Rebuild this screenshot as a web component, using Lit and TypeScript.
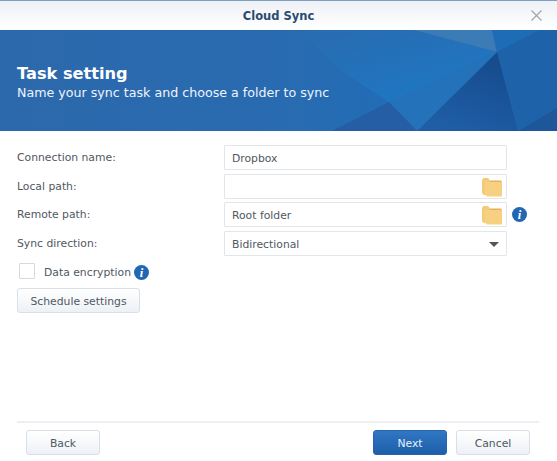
import { LitElement, html, css, svg } from "lit";
import { customElement } from "lit/decorators.js";

const folder = html`<svg class="folder" viewBox="0 0 21 19" width="21" height="19" aria-hidden="true">
  <path d="M0 1.5 L1.5 0 H6 L8 2.5 V17 H1.5 L0 15 Z" fill="#f3cb7b"/>
  <path d="M3 4 H20 V18.5 H5 L3 16.5 Z" fill="#f7d082"/>
  <path d="M3 4 H7 L8.5 2.5 H19 L20 4 Z" fill="#e3b35c"/>
</svg>`;

const info = html`<svg class="info" viewBox="0 0 15 15" width="15" height="15" aria-hidden="true">
  <circle cx="7.5" cy="7.5" r="7.5" fill="#2167b4"/>
  <text x="7.6" y="12" text-anchor="middle" font-family="Liberation Serif, serif" font-style="italic" font-weight="700" font-size="12.5" fill="#fff">i</text>
</svg>`;

const facets = svg`
  <defs>
    <linearGradient id="base" x1="0" y1="0" x2="1" y2="0">
      <stop offset="0" stop-color="#2c68ac"/>
      <stop offset="0.5" stop-color="#296bb0"/>
      <stop offset="0.75" stop-color="#1f6db8"/>
      <stop offset="1" stop-color="#1d68b2"/>
    </linearGradient>
    <linearGradient id="mid" x1="0" y1="0" x2="0.75" y2="1">
      <stop offset="0" stop-color="#296bb0"/>
      <stop offset="1" stop-color="#1e78c4"/>
    </linearGradient>
    <linearGradient id="dark" x1="0.8" y1="0" x2="0.3" y2="1">
      <stop offset="0" stop-color="#154a8b"/>
      <stop offset="1" stop-color="#1f5ea6"/>
    </linearGradient>
  </defs>
  <rect width="557" height="101" fill="url(#base)"/>
  <polygon points="300,0 414,0 497,22 389,72 340,40" fill="url(#mid)"/>
  <polygon points="414,0 492,0 497,22" fill="#3b7cb6"/>
  <polygon points="492,0 540,0 497,22" fill="#1f6cb6"/>
  <polygon points="540,0 557,0 557,78 518,100 497,22" fill="#1e62aa"/>
  <polygon points="497,22 417,101 518,101" fill="url(#dark)"/>
  <polygon points="497,22 389,72 417,101" fill="#2472ba"/>
  <polygon points="389,72 332,101 417,101" fill="#255ea4"/>
  <polygon points="557,78 518,101 557,101" fill="#1d5699"/>
`;

@customElement("app-root")
export class AppRoot extends LitElement {
  static styles = css`
    :host {
      display: flex;
      flex-direction: column;
      width: 557px;
      height: 461px;
      background: #fff;
      color: #50585f;
      font-family: "DejaVu Sans", Verdana, sans-serif;
      font-size: 10.8px;
      overflow: hidden;
    }
    .titlebar {
      flex: none;
      height: 30px;
      box-sizing: border-box;
      border-top: 1px solid #7d9fc4;
      background: linear-gradient(#eef1f5, #ffffff);
      display: flex;
      align-items: center;
      justify-content: center;
      position: relative;
    }
    .title {
      font-weight: 700;
      font-size: 11.5px;
      color: #2b4a70;
    }
    .close {
      position: absolute;
      right: 15px;
      top: 9px;
      width: 11px;
      height: 11px;
    }
    .banner {
      flex: none;
      height: 101px;
      box-sizing: border-box;
      position: relative;
      padding: 34px 17px 0;
      color: #fff;
    }
    .facets {
      position: absolute;
      left: 0;
      top: 0;
      width: 557px;
      height: 101px;
    }
    .banner h1,
    .banner p {
      position: relative;
      margin: 0;
    }
    .banner h1 {
      font-size: 16.2px;
      line-height: 19px;
      font-weight: 700;
    }
    .banner p {
      font-size: 12.65px;
      line-height: 18px;
      margin-top: 1px;
      color: #eef4fb;
    }
    .form {
      flex: 1;
      padding: 14px 17px 0;
    }
    .grid {
      display: grid;
      grid-template-columns: 207px 283px auto;
      grid-auto-rows: 25px;
      row-gap: 3.7px;
      align-items: center;
    }
    .field {
      height: 25px;
      box-sizing: border-box;
      border: 1.5px solid #e3e6e9;
      border-radius: 1px;
      background: #fff;
      display: flex;
      align-items: center;
      justify-content: space-between;
      padding: 1px 3px 0 7px;
    }
    .folder {
      margin-top: 1px;
      flex: none;
    }
    .grid .info {
      margin-left: 5px;
      display: block;
    }
    .caret {
      width: 0;
      height: 0;
      border-left: 5px solid transparent;
      border-right: 5px solid transparent;
      border-top: 5px solid #555;
      margin: 1px 4px 0 0;
    }
    .check {
      display: flex;
      align-items: flex-start;
      margin: 7px 0 0 2px;
      height: 17px;
    }
    .box {
      width: 16px;
      height: 16px;
      box-sizing: border-box;
      border: 1.5px solid #d6d9dd;
      border-radius: 1px;
      margin-right: 9px;
    }
    .check .text {
      margin-top: 3px;
    }
    .check .info {
      margin: 2px 0 0 3px;
    }
    button {
      font: inherit;
      color: #50585f;
      height: 25px;
      box-sizing: border-box;
      border: 1px solid #d8dfe7;
      border-radius: 3px;
      background: linear-gradient(#ffffff, #edf1f6);
      padding: 1px 0 0;
    }
    .schedule {
      display: block;
      width: 123px;
      margin-top: 8px;
    }
    .footer {
      flex: none;
      margin: 0 18px 6px 17px;
      height: 32px;
      border-top: 2px solid #eeeff0;
      display: flex;
      align-items: flex-end;
      padding: 0 9px;
    }
    .footer button {
      width: 74px;
    }
    .spacer {
      flex: 1;
    }
    .footer .next {
      background: linear-gradient(#3177c4, #1e5ea8);
      border-color: #2366ae;
      color: #e8f1fb;
      margin-right: 9px;
    }
  `;

  render() {
    return html`
      <div class="titlebar">
        <span class="title">Cloud Sync</span>
        <svg class="close" viewBox="0 0 11 11" aria-hidden="true">
          <path d="M.5.5 10.5 10.5M10.5.5.5 10.5" stroke="#a3a8ad" stroke-width="1.3" fill="none"/>
        </svg>
      </div>
      <div class="banner">
        <svg class="facets" viewBox="0 0 557 101" aria-hidden="true">${facets}</svg>
        <h1>Task setting</h1>
        <p>Name your sync task and choose a folder to sync</p>
      </div>
      <div class="form">
        <div class="grid">
          <span>Connection name:</span>
          <div class="field">Dropbox</div>
          <span></span>
          <span>Local path:</span>
          <div class="field"><span></span>${folder}</div>
          <span></span>
          <span>Remote path:</span>
          <div class="field">Root folder${folder}</div>
          ${info}
          <span>Sync direction:</span>
          <div class="field">Bidirectional<span class="caret"></span></div>
          <span></span>
        </div>
        <div class="check">
          <span class="box"></span>
          <span class="text">Data encryption</span>
          ${info}
        </div>
        <button class="schedule">Schedule settings</button>
      </div>
      <div class="footer">
        <button>Back</button>
        <span class="spacer"></span>
        <button class="next">Next</button>
        <button>Cancel</button>
      </div>
    `;
  }
}
